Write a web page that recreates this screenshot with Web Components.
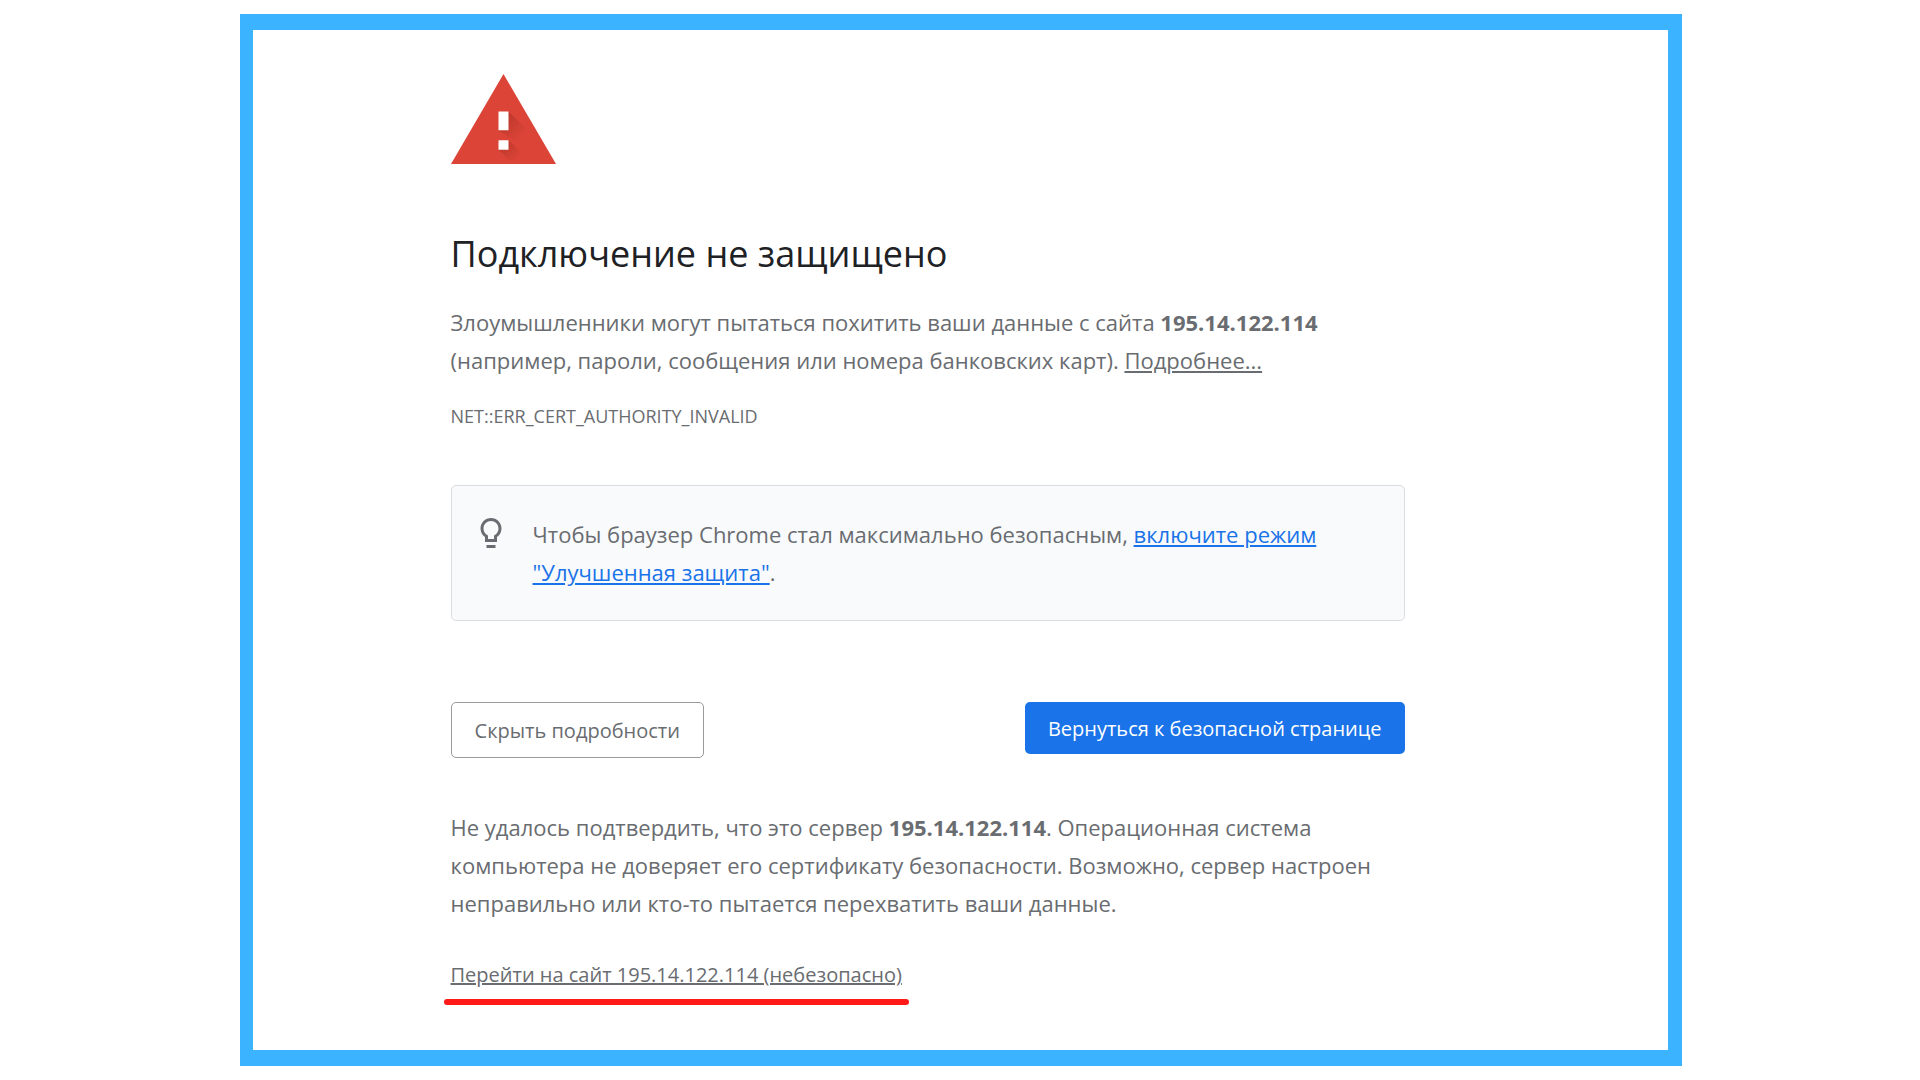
<!DOCTYPE html>
<html lang="ru">
<head>
  <meta charset="UTF-8">
  <meta name="viewport" content="width=device-width, initial-scale=1.0">
  <title>Подключение не защищено</title>
  <style>
    body {
      margin: 0;
      background-color: #fff;
      color: #696c70;
      font-family: 'Open Sans', 'Noto Sans', sans-serif;
      font-size: 22px;
      line-height: 38px;
    }
  </style>
</head>
<body>
  <page-frame>
    <warning-icon></warning-icon>
    <security-error></security-error>
  </page-frame>

  <script>
    'use strict';

    class PageFrame extends HTMLElement {
      constructor() {
        super();
        this.shadowDOM = this.attachShadow({ mode: 'open' });
      }
      connectedCallback() {
        this.render();
      }
      render() {
        this.shadowDOM.innerHTML = `
          <style>
            :host {
              display: block;
              padding: 14px 12.4% 14px 12.5%;
            }
            .frame {
              border: 16px solid #3cb3ff;
              border-width: 16px 14px 16px 13px;
              padding: 44px 13.7% 45px;
            }
            main {
              max-width: 954px;
            }
          </style>
          <div class="frame">
            <main><slot></slot></main>
          </div>
        `;
      }
    }
    customElements.define('page-frame', PageFrame);

    class WarningIcon extends HTMLElement {
      constructor() {
        super();
        this.shadowDOM = this.attachShadow({ mode: 'open' });
      }
      connectedCallback() {
        this.render();
      }
      render() {
        this.shadowDOM.innerHTML = `
          <style>
            :host {
              display: block;
              margin-bottom: 67px;
            }
            svg {
              display: block;
            }
          </style>
          <svg width="105" height="90" viewBox="0 0 105 91" preserveAspectRatio="none" aria-hidden="true">
            <defs>
              <linearGradient id="shade" x1="48" y1="38" x2="72" y2="62" gradientUnits="userSpaceOnUse">
                <stop offset="0" stop-color="#9c2a20" stop-opacity=".6"/>
                <stop offset="1" stop-color="#9c2a20" stop-opacity="0"/>
              </linearGradient>
              <linearGradient id="shade-dot" x1="48" y1="67" x2="66" y2="85" gradientUnits="userSpaceOnUse">
                <stop offset="0" stop-color="#9c2a20" stop-opacity=".6"/>
                <stop offset="1" stop-color="#9c2a20" stop-opacity="0"/>
              </linearGradient>
            </defs>
            <path fill="#db4437" d="M52.500 0L105 91H0z"/>
            <path fill="url(#shade)" d="M57.500 38l26 26v16L47.500 57z"/>
            <path fill="url(#shade-dot)" d="M57.500 67l24 24H62L47.500 76z"/>
            <path fill="#fff" d="M47.500 38h10v19h-10zM47.500 67h10v9.500h-10z"/>
          </svg>
        `;
      }
    }
    customElements.define('warning-icon', WarningIcon);

    class SafetyTip extends HTMLElement {
      constructor() {
        super();
        this.shadowDOM = this.attachShadow({ mode: 'open' });
      }
      connectedCallback() {
        this.render();
      }
      render() {
        this.shadowDOM.innerHTML = `
          <style>
            :host {
              display: flex;
              align-items: flex-start;
              gap: 24px;
              padding: 29px 21px;
              border: 1px solid #dadce0;
              border-radius: 5px;
              background-color: #f8fafc;
            }
            svg {
              flex: none;
            }
            p {
              margin: 0;
            }
          </style>
          <svg width="36" height="36" viewBox="0 0 24 24" fill="#696c70" aria-hidden="true">
            <path d="M9 20h6v2H9zM12 2C8.140 2 5 5.140 5 9c0 2.380 1.190 4.470 3 5.740V18h8v-3.260c1.810-1.270 3-3.360 3-5.740 0-3.860-3.140-7-7-7zm2.850 11.100l-.85.6V16h-4v-2.300l-.85-.6C7.800 12.160 7 10.630 7 9c0-2.760 2.240-5 5-5s5 2.240 5 5c0 1.630-.8 3.160-2.150 4.100z"/>
          </svg>
          <p><slot></slot></p>
        `;
      }
    }
    customElements.define('safety-tip', SafetyTip);

    class ActionButton extends HTMLElement {
      constructor() {
        super();
        this.shadowDOM = this.attachShadow({ mode: 'open' });
      }
      connectedCallback() {
        this.render();
      }
      render() {
        this.shadowDOM.innerHTML = `
          <style>
            :host {
              display: block;
            }
            button {
              display: block;
              box-sizing: border-box;
              padding: 14px 23px 12px;
              border: 1px solid #999c9f;
              border-radius: 5px;
              background-color: #fff;
              color: #696c70;
              font-family: inherit;
              font-size: 20px;
              line-height: 28px;
              cursor: pointer;
            }
            :host([primary]) button {
              padding: 13px 23px 11px;
              border: 0;
              background-color: #1a73e8;
              color: #fff;
            }
          </style>
          <button type="button"><slot></slot></button>
        `;
      }
    }
    customElements.define('action-button', ActionButton);

    class ProceedLink extends HTMLElement {
      constructor() {
        super();
        this.shadowDOM = this.attachShadow({ mode: 'open' });
      }
      connectedCallback() {
        this.render();
      }
      render() {
        this.shadowDOM.innerHTML = `
          <style>
            :host {
              display: block;
              width: fit-content;
              font-size: 20px;
              line-height: 28px;
            }
            a {
              display: block;
              color: inherit;
            }
            /* red marker stroke under the link */
            .marker {
              height: 6px;
              margin: 10px -7px 0;
              border-radius: 3px;
              background-color: #ff1a1a;
            }
          </style>
          <a href="#"><slot></slot></a>
          <div class="marker"></div>
        `;
      }
    }
    customElements.define('proceed-link', ProceedLink);

    class SecurityError extends HTMLElement {
      constructor() {
        super();
        this.shadowDOM = this.attachShadow({ mode: 'open' });
      }
      connectedCallback() {
        this.render();
      }
      render() {
        this.shadowDOM.innerHTML = `
          <style>
            :host {
              display: block;
            }
            h1 {
              margin: 0 0 26px;
              color: #202124;
              font-size: 36px;
              font-weight: 400;
              line-height: 46px;
            }
            p {
              margin: 0;
            }
            a {
              color: inherit;
            }
            safety-tip a {
              color: #1a73e8;
            }
            .code {
              margin: 23px 0 55px;
              font-size: 18px;
              line-height: 28px;
            }
            .buttons {
              display: flex;
              flex-wrap: wrap;
              align-items: flex-start;
              justify-content: space-between;
              gap: 16px;
              margin: 81px 0 50px;
            }
            .details {
              margin-bottom: 39px;
            }
          </style>
          <h1>Подключение не защищено</h1>
          <p>Злоумышленники могут пытаться похитить ваши данные с сайта <strong>195.14.122.114</strong> (например, пароли, сообщения или номера банковских карт). <a href="#">Подробнее...</a></p>
          <p class="code">NET::ERR_CERT_AUTHORITY_INVALID</p>
          <safety-tip>Чтобы браузер Chrome стал максимально безопасным, <a href="#">включите режим "Улучшенная защита"</a>.</safety-tip>
          <div class="buttons">
            <action-button>Скрыть подробности</action-button>
            <action-button primary>Вернуться к безопасной странице</action-button>
          </div>
          <p class="details">Не удалось подтвердить, что это сервер <strong>195.14.122.114</strong>. Операционная система компьютера не доверяет его сертификату безопасности. Возможно, сервер настроен неправильно или кто-то пытается перехватить ваши данные.</p>
          <proceed-link>Перейти на сайт 195.14.122.114 (небезопасно)</proceed-link>
        `;
      }
    }
    customElements.define('security-error', SecurityError);
  </script>
</body>
</html>
